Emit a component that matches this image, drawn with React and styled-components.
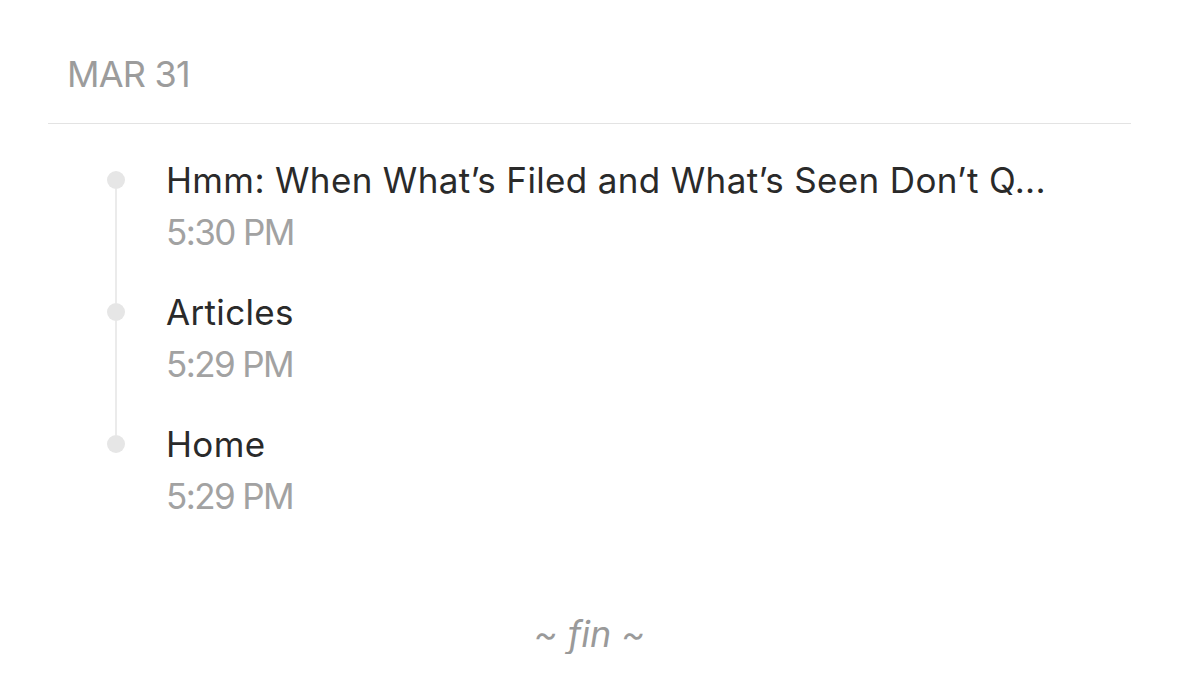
import styled, { createGlobalStyle } from "styled-components";

const GlobalStyle = createGlobalStyle`
    html, body {
        margin: 0;
        padding: 0;
        background: #fff;
    }
    body {
        font-family: Inter, "Liberation Sans", Arial, sans-serif;
        -webkit-font-smoothing: antialiased;
    }
`;

const entries = [
    { title: "Hmm: When What’s Filed and What’s Seen Don’t Q...", time: "5:30 PM" },
    { title: "Articles", time: "5:29 PM" },
    { title: "Home", time: "5:29 PM" },
];

export default function App() {
    return (
        <>
            <GlobalStyle />
            <Page>
                <DayHeader>MAR 31</DayHeader>
                <Timeline>
                    {entries.map((entry, i) => (
                        <Entry key={i}>
                            <Rail>
                                <RailLine $hidden={i === 0} $fixed />
                                <Dot />
                                <RailLine $hidden={i === entries.length - 1} />
                            </Rail>
                            <Body $last={i === entries.length - 1}>
                                <Title>{entry.title}</Title>
                                <Time>{entry.time}</Time>
                            </Body>
                        </Entry>
                    ))}
                </Timeline>
                <Fin>~ fin ~</Fin>
            </Page>
        </>
    );
}

const Page = styled.div`
    padding: 0 48px;
    display: flex;
    flex-direction: column;
`;

const DayHeader = styled.div`
    height: 124px;
    box-sizing: border-box;
    padding: 52px 0 0 19px;
    font-size: 36px;
    line-height: 44px;
    letter-spacing: -0.8px;
    color: #9c9c9c;
    border-bottom: 1px solid #e3e3e3;
`;

const Timeline = styled.div`
    display: flex;
    flex-direction: column;
    padding: 36px 0 0 59px;
`;

const Entry = styled.div`
    display: flex;
    gap: 41px;
`;

const Rail = styled.div`
    width: 18px;
    display: flex;
    flex-direction: column;
    align-items: center;
`;

const RailLine = styled.div`
    width: 2px;
    background: ${(p) => (p.$hidden ? "transparent" : "#ebebeb")};
    ${(p) => (p.$fixed ? "height: 11px;" : "flex: 1;")}
`;

const Dot = styled.div`
    width: 18px;
    height: 18px;
    border-radius: 50%;
    background: #e6e6e6;
    flex-shrink: 0;
`;

const Body = styled.div`
    display: flex;
    flex-direction: column;
    padding-bottom: ${(p) => (p.$last ? "0" : "38px")};
`;

const Title = styled.div`
    font-size: 35px;
    line-height: 40px;
    color: #2a2a2a;
    letter-spacing: 0.35px;
    white-space: nowrap;
`;

const Time = styled.div`
    margin-top: 10px;
    font-size: 35px;
    line-height: 44px;
    color: #a2a2a2;
    letter-spacing: -1.6px;
`;

const Fin = styled.div`
    margin-top: 96px;
    text-align: center;
    font-style: italic;
    font-size: 36px;
    line-height: 40px;
    color: #9a9a9a;
`;
